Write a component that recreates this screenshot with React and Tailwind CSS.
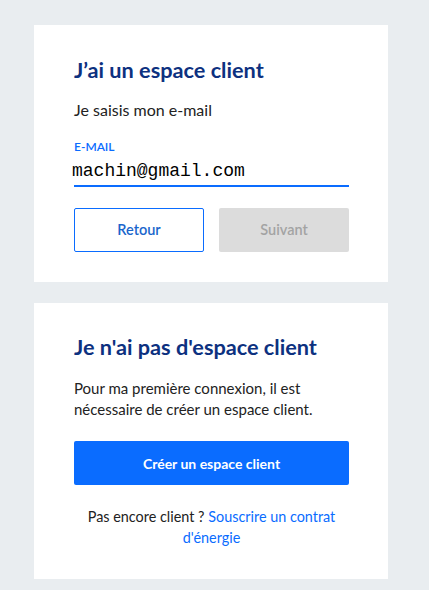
export default function App() {
  return (
    <div className="min-h-[590px] w-[429px] bg-[#e9edf0] pt-[25px] pb-[10px] pl-[34px] flex flex-col gap-[21px]" style={{ fontFamily: "Lato, 'Noto Sans', sans-serif" }}>
      <div className="bg-white w-[354px] pl-[40px] pr-[39px] pt-[31px] h-[257px]">
        <h2 className="text-[21.7px] font-bold text-[#0d3180] leading-[28px]">J’ai un espace client</h2>
        <p className="mt-[15px] text-[16px] text-[#222] leading-[22px]">Je saisis mon e-mail</p>
        <div className="mt-[19px] text-[12px] font-semibold text-[#0a6cff] leading-[14px]">E-MAIL</div>
        <div className="border-b-2 border-[#0a6cff] h-[33px] flex items-center pt-[3px]">
          <span className="text-[18px] text-black leading-[20px] -ml-[2px]" style={{ fontFamily: "'Liberation Mono', monospace" }}>machin@gmail.com</span>
        </div>
        <div className="mt-[21px] flex gap-[15px]">
          <button className="w-[130px] h-[44px] border border-[#0a6cff] rounded-[2px] text-[14.5px] font-semibold text-[#1a66cc] bg-white">Retour</button>
          <button className="w-[130px] h-[44px] rounded-[2px] text-[14.5px] font-semibold text-[#a3a3a3] bg-[#dcdcdc]">Suivant</button>
        </div>
      </div>
      <div className="bg-white w-[354px] pl-[40px] pr-[39px] pt-[30px] h-[276px]">
        <h2 className="text-[21.7px] font-bold text-[#0d3180] leading-[28px]">Je n'ai pas d'espace client</h2>
        <p className="mt-[17px] text-[15px] text-[#222] leading-[21px]">Pour ma première connexion, il est nécessaire de créer un espace client.</p>
        <button className="mt-[21px] w-full h-[44px] rounded-[2px] bg-[#0a6cff] text-white text-[14px] font-bold">Créer un espace client</button>
        <p className="mt-[21px] text-[14.4px] text-[#222] leading-[21px] text-center px-[4px]">
          Pas encore client ? <span className="text-[#0a6cff]">Souscrire un contrat d'énergie</span>
        </p>
      </div>
    </div>
  );
}
